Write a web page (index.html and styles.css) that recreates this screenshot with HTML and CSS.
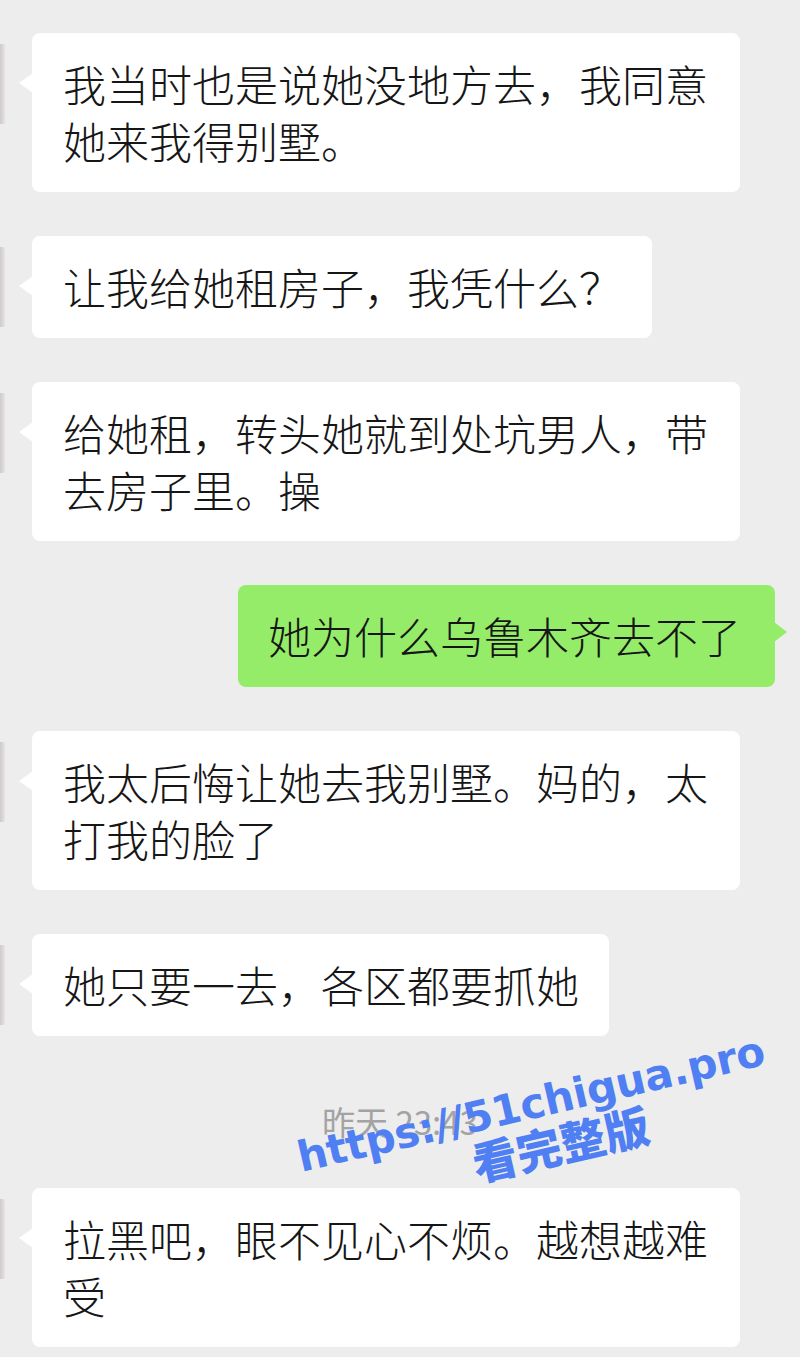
FILE: index.html
```html
<!DOCTYPE html>
<html lang="zh-CN">
<head>
    <meta charset="UTF-8">
    <meta name="viewport" content="width=device-width, initial-scale=1.0">
    <title>聊天记录</title>
    <link rel="stylesheet" href="styles.css">
</head>
<body>
    <div class="chat">
        <div class="row">
            <div class="avatar"></div>
            <div class="bubble">我当时也是说她没地方去，我同意她来我得别墅。</div>
        </div>
        <div class="row">
            <div class="avatar"></div>
            <div class="bubble">让我给她租房子，我凭什么？</div>
        </div>
        <div class="row">
            <div class="avatar"></div>
            <div class="bubble">给她租，转头她就到处坑男人，带去房子里。操</div>
        </div>
        <div class="row self">
            <div class="bubble green">她为什么乌鲁木齐去不了</div>
        </div>
        <div class="row">
            <div class="avatar"></div>
            <div class="bubble">我太后悔让她去我别墅。妈的，太打我的脸了</div>
        </div>
        <div class="row">
            <div class="avatar"></div>
            <div class="bubble">她只要一去，各区都要抓她</div>
        </div>
        <div class="time">昨天 23:43</div>
        <div class="row">
            <div class="avatar"></div>
            <div class="bubble">拉黑吧，眼不见心不烦。越想越难受</div>
        </div>
    </div>
    <div class="watermark">
        <span class="wm-url">https://51chigua.pro</span>
        <span class="wm-cn">看完整版</span>
    </div>
</body>
</html>
```

FILE: styles.css
```css
html, body {
    margin: 0;
    padding: 0;
}
body {
    background-color: #ededed;
    font-family: "Noto Sans CJK SC", "Noto Sans", sans-serif;
    color: #161616;
    width: 800px;
    height: 1357px;
    overflow: hidden;
    position: relative;
}
.chat {
    display: flex;
    flex-direction: column;
    gap: 44px;
    padding-top: 33px;
}
.row {
    display: flex;
    align-items: flex-start;
}
.row.self {
    justify-content: flex-end;
    padding-right: 25px;
}
.avatar {
    width: 5px;
    height: 80px;
    margin-top: 11px;
    margin-right: 27px;
    background: linear-gradient(90deg, #cfcaca, #e6e3e3);
    border-radius: 0 2px 2px 0;
}
.bubble {
    position: relative;
    box-sizing: border-box;
    max-width: 708px;
    padding: 22px 30px 23px 31px;
    background: #fff;
    border-radius: 8px;
    font-size: 43px;
    font-weight: 300;
    line-height: 57px;
}
.bubble::before {
    content: "";
    position: absolute;
    left: -13px;
    top: 40px;
    border-top: 10px solid transparent;
    border-bottom: 10px solid transparent;
    border-right: 14px solid #fff;
}
.bubble.green {
    background: #95ec69;
    padding: 22px 34px 23px 30px;
}
.bubble.green::before {
    left: auto;
    right: -12px;
    top: 37px;
    border-right: none;
    border-left: 13px solid #95ec69;
}
.time {
    text-align: center;
    font-size: 33px;
    line-height: 40px;
    color: #a3a3a3;
    margin: 21px 0 3px;
}
.watermark {
    position: absolute;
    left: 276px;
    top: 1082px;
    width: 520px;
    text-align: center;
    transform: rotate(-13deg);
    color: #4f7ff2;
    font-weight: bold;
}
.wm-url {
    display: block;
    font-family: "DejaVu Sans", sans-serif;
    font-size: 42px;
    line-height: 44px;
    letter-spacing: -0.3px;
}
.wm-cn {
    display: block;
    padding-left: 40px;
    font-family: "Noto Sans CJK SC", sans-serif;
    font-weight: 900;
    font-size: 45px;
    line-height: 44px;
}
```
